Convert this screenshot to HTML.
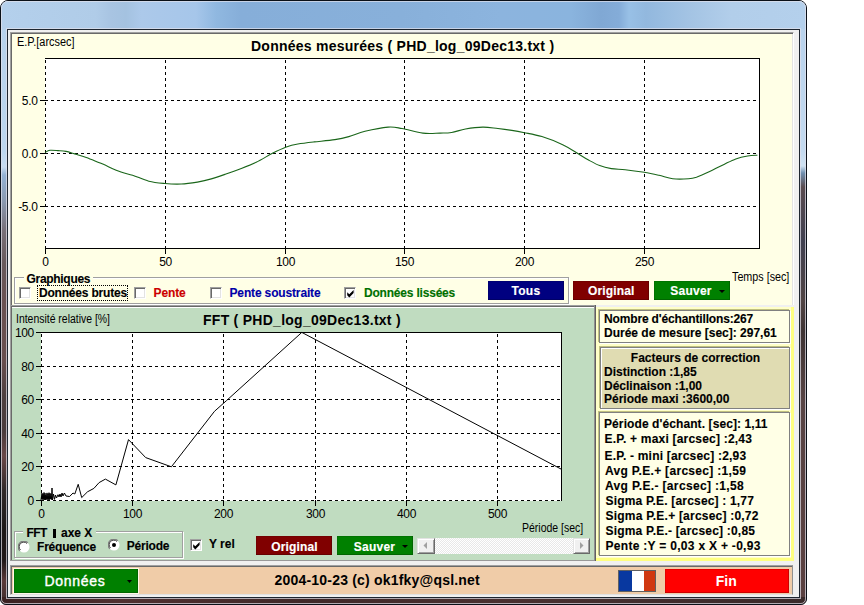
<!DOCTYPE html>
<html><head><meta charset="utf-8">
<style>
*{margin:0;padding:0;box-sizing:border-box}
html,body{width:864px;height:605px;overflow:hidden;background:#fff;position:relative;font-family:"Liberation Sans", sans-serif}
.a{position:absolute}
.t{position:absolute;white-space:pre;line-height:1;font-family:"Liberation Sans", sans-serif}
</style></head><body>
<div class="a" style="left:0px;top:0px;width:807px;height:605px;background:#402c2c;border:1px solid #0a1018;border-radius:8px 8px 6px 6px;overflow:hidden"></div>
<div class="a" style="left:1px;top:1px;width:7px;height:603px;background:linear-gradient(180deg,#b6d1ec 0px,#bcd6ee 150px,#c8dcf0 166px,#94b2d4 174px,#8a9ab0 200px,#787078 230px,#685a5c 262px,#6a5252 300px,#684e4e 360px,#4e4040 395px,#4a3c3c 430px,#6a4848 455px,#302828 490px,#1c1818 530px,#201818 560px,#5a3838 580px,#3a2a2a 605px);border-radius:7px 0 0 5px"></div>
<div class="a" style="left:799px;top:1px;width:7px;height:603px;background:linear-gradient(180deg,#b6d1ec 0px,#c4daf0 150px,#d0e2f2 165px,#7090b0 172px,#5a4c50 186px,#404050 240px,#504444 300px,#3e3434 330px,#584444 400px,#5a4040 605px);border-radius:0 7px 5px 0"></div>
<div class="a" style="left:1px;top:597px;width:805px;height:7px;background:linear-gradient(90deg,#3a2020 0px,#503030 120px,#402828 300px,#4a3030 500px,#3a2a2a 805px);border-radius:0 0 5px 5px"></div>
<div class="a" style="left:1px;top:1px;width:805px;height:28px;background:linear-gradient(90deg,#b4d0ec 0px,#b0cce8 95px,#a8c4e2 110px,#a4c2e0 125px,#acc9ea 140px,#a6c6ea 195px,#90b8e0 215px,#86aed9 240px,#88b0da 400px,#8cb4de 500px,#8ab4de 570px,#80a8d4 600px,#84acd8 618px,#98c0e6 628px,#92b8de 645px,#a4c4e4 690px,#b2ceea 730px,#b4d0ec 806px);border-radius:7px 7px 0 0"></div>
<div class="a" style="left:1px;top:1px;width:805px;height:603px;background:transparent;border:1px solid rgba(225,225,235,0.7);border-radius:7px 7px 5px 5px"></div>
<div class="a" style="left:6px;top:28px;width:795px;height:571px;background:transparent;border:1px solid rgba(225,225,235,0.7)"></div>
<div class="a" style="left:7px;top:29px;width:793px;height:569px;background:#f0f0f0;border:1px solid #1e2630"></div>
<div class="a" style="left:10px;top:32px;width:784px;height:273px;background:#ffffe6;border-top:1px solid #a0a0a0;border-left:1px solid #a0a0a0;border-right:1px solid #fff;box-shadow:inset 1px 1px 0 #696969, inset -1px 0 0 #e3e3e3"></div>
<div class="t" style="left:16.5px;top:36.22px;font-size:12.5px;font-weight:normal;color:#000;letter-spacing:0px;transform:scaleX(0.875);transform-origin:0 0;">E.P.[arcsec]</div>
<div class="t" style="left:251px;top:38.65px;font-size:14px;font-weight:bold;color:#000;letter-spacing:0.25px;-webkit-text-stroke:0.12px #000;-webkit-text-stroke:0;">Données mesurées ( PHD_log_09Dec13.txt )</div>
<div class="t" style="left:-262.5px;width:300px;text-align:right;top:95.04px;font-size:12px;font-weight:normal;color:#000;letter-spacing:-0.35px;">5.0</div>
<div class="t" style="left:-262.5px;width:300px;text-align:right;top:148.04px;font-size:12px;font-weight:normal;color:#000;letter-spacing:-0.35px;">0.0</div>
<div class="t" style="left:-262.5px;width:300px;text-align:right;top:201.04px;font-size:12px;font-weight:normal;color:#000;letter-spacing:-0.35px;">-5.0</div>
<div class="t" style="left:-104.5px;width:300px;text-align:center;top:255.84px;font-size:12px;font-weight:normal;color:#000;letter-spacing:-0.4px;">0</div>
<div class="t" style="left:15.5px;width:300px;text-align:center;top:255.84px;font-size:12px;font-weight:normal;color:#000;letter-spacing:-0.4px;">50</div>
<div class="t" style="left:135.5px;width:300px;text-align:center;top:255.84px;font-size:12px;font-weight:normal;color:#000;letter-spacing:-0.4px;">100</div>
<div class="t" style="left:254.5px;width:300px;text-align:center;top:255.84px;font-size:12px;font-weight:normal;color:#000;letter-spacing:-0.4px;">150</div>
<div class="t" style="left:374.5px;width:300px;text-align:center;top:255.84px;font-size:12px;font-weight:normal;color:#000;letter-spacing:-0.4px;">200</div>
<div class="t" style="left:494.5px;width:300px;text-align:center;top:255.84px;font-size:12px;font-weight:normal;color:#000;letter-spacing:-0.4px;">250</div>
<div class="t" style="left:731.8px;top:270.62px;font-size:12.5px;font-weight:normal;color:#000;letter-spacing:0px;transform:scaleX(0.86);transform-origin:0 0;">Temps [sec]</div>
<div class="a" style="left:14px;top:277px;width:555px;height:27px;background:transparent;border:1px solid #a0a0a0;box-shadow:inset 1px 1px 0 #fff, 1px 1px 0 #fff"></div>
<div class="a" style="left:24px;top:272px;width:69px;height:9px;background:#ffffe6;"></div>
<div class="t" style="left:26.5px;top:272.84px;font-size:12px;font-weight:bold;color:#000;letter-spacing:-0.3px;-webkit-text-stroke:0.12px #000;">Graphiques</div>
<div class="a" style="left:19px;top:287px;width:12px;height:12px;background:#fff;border-top:1px solid #a0a0a0;border-left:1px solid #a0a0a0;border-right:1px solid #fff;border-bottom:1px solid #fff;box-shadow:inset 1px 1px 0 #696969, inset -1px -1px 0 #e3e3e3"></div>
<div class="a" style="left:37px;top:285px;width:91px;height:16px;background:transparent;border:1px dotted #000"></div>
<div class="t" style="left:39px;top:286.84px;font-size:12px;font-weight:bold;color:#000;letter-spacing:-0.2px;-webkit-text-stroke:0.12px #000;">Données brutes</div>
<div class="a" style="left:134px;top:287px;width:12px;height:12px;background:#fff;border-top:1px solid #a0a0a0;border-left:1px solid #a0a0a0;border-right:1px solid #fff;border-bottom:1px solid #fff;box-shadow:inset 1px 1px 0 #696969, inset -1px -1px 0 #e3e3e3"></div>
<div class="t" style="left:153.5px;top:286.84px;font-size:12px;font-weight:bold;color:#cc0000;letter-spacing:-0.1px;-webkit-text-stroke:0.12px #cc0000;">Pente</div>
<div class="a" style="left:210px;top:287px;width:12px;height:12px;background:#fff;border-top:1px solid #a0a0a0;border-left:1px solid #a0a0a0;border-right:1px solid #fff;border-bottom:1px solid #fff;box-shadow:inset 1px 1px 0 #696969, inset -1px -1px 0 #e3e3e3"></div>
<div class="t" style="left:229.5px;top:286.84px;font-size:12px;font-weight:bold;color:#0000a8;letter-spacing:-0.15px;-webkit-text-stroke:0.12px #0000a8;">Pente soustraite</div>
<div class="a" style="left:344px;top:287px;width:12px;height:12px;background:#fff;border-top:1px solid #a0a0a0;border-left:1px solid #a0a0a0;border-right:1px solid #fff;border-bottom:1px solid #fff;box-shadow:inset 1px 1px 0 #696969, inset -1px -1px 0 #e3e3e3"></div>
<svg class="a" style="left:344px;top:287px" width="12" height="12"><path d="M3.2,5.2 L5.3,7.3 L9.6,3 V6.1 L5.3,10.4 L3.2,8.3 Z" fill="#000"/></svg>
<div class="t" style="left:364px;top:286.84px;font-size:12px;font-weight:bold;color:#007000;letter-spacing:-0.2px;-webkit-text-stroke:0.12px #007000;">Données lissées</div>
<div class="a" style="left:488px;top:281px;width:76px;height:19px;background:#000080;box-shadow:inset -1px -1px 0 rgba(0,0,0,0.2), inset 1px 1px 0 rgba(0,0,0,0.1)"></div>
<div class="t" style="left:376.0px;width:300px;text-align:center;top:285.34px;font-size:12px;font-weight:bold;color:#fff;letter-spacing:0.3px;-webkit-text-stroke:0.12px #fff;-webkit-text-stroke:0.15px #fff;">Tous</div>
<div class="a" style="left:573px;top:281px;width:76px;height:19px;background:#800000;box-shadow:inset -1px -1px 0 rgba(0,0,0,0.2), inset 1px 1px 0 rgba(0,0,0,0.1)"></div>
<div class="t" style="left:461.29999999999995px;width:300px;text-align:center;top:285.34px;font-size:12px;font-weight:bold;color:#fff;letter-spacing:0.15px;-webkit-text-stroke:0.12px #fff;-webkit-text-stroke:0.15px #fff;">Original</div>
<div class="a" style="left:654px;top:281px;width:76px;height:19px;background:#008000;box-shadow:inset -1px -1px 0 rgba(0,0,0,0.2), inset 1px 1px 0 rgba(0,0,0,0.1)"></div>
<div class="t" style="left:541px;width:300px;text-align:center;top:285.34px;font-size:12px;font-weight:bold;color:#fff;letter-spacing:0.25px;-webkit-text-stroke:0.12px #fff;-webkit-text-stroke:0.15px #fff;">Sauver</div>
<svg class="a" style="left:719px;top:289.5px" width="7" height="4"><path d="M0,0 H6 L3,3 Z" fill="#000"/></svg>
<div class="a" style="left:10px;top:305px;width:586px;height:256px;background:#c0dcc0;border-top:1px solid #a0a0a0;border-left:1px solid #a0a0a0;border-bottom:1px solid #999;box-shadow:inset 1px 1px 0 #696969, inset 0 2px 0 #fff"></div>
<div class="a" style="left:594px;top:305px;width:1px;height:256px;background:#909090;"></div>
<div class="a" style="left:595px;top:305px;width:1px;height:256px;background:#606060;"></div>
<div class="t" style="left:16.2px;top:313.42px;font-size:12.5px;font-weight:normal;color:#000;letter-spacing:0px;transform:scaleX(0.835);transform-origin:0 0;">Intensité relative [%]</div>
<div class="t" style="left:203px;top:313.35px;font-size:14px;font-weight:bold;color:#000;letter-spacing:0.27px;-webkit-text-stroke:0.12px #000;-webkit-text-stroke:0;">FFT ( PHD_log_09Dec13.txt )</div>
<div class="t" style="left:-266.3px;width:300px;text-align:right;top:495.04px;font-size:12px;font-weight:normal;color:#000;letter-spacing:-0.4px;">0</div>
<div class="t" style="left:-266.3px;width:300px;text-align:right;top:461.04px;font-size:12px;font-weight:normal;color:#000;letter-spacing:-0.4px;">20</div>
<div class="t" style="left:-266.3px;width:300px;text-align:right;top:428.04px;font-size:12px;font-weight:normal;color:#000;letter-spacing:-0.4px;">40</div>
<div class="t" style="left:-266.3px;width:300px;text-align:right;top:394.04px;font-size:12px;font-weight:normal;color:#000;letter-spacing:-0.4px;">60</div>
<div class="t" style="left:-266.3px;width:300px;text-align:right;top:361.04px;font-size:12px;font-weight:normal;color:#000;letter-spacing:-0.4px;">80</div>
<div class="t" style="left:-266.3px;width:300px;text-align:right;top:327.04px;font-size:12px;font-weight:normal;color:#000;letter-spacing:-0.4px;">100</div>
<div class="t" style="left:-108.5px;width:300px;text-align:center;top:507.64px;font-size:12px;font-weight:normal;color:#000;letter-spacing:-0.4px;">0</div>
<div class="t" style="left:-17.5px;width:300px;text-align:center;top:507.64px;font-size:12px;font-weight:normal;color:#000;letter-spacing:-0.4px;">100</div>
<div class="t" style="left:73.5px;width:300px;text-align:center;top:507.64px;font-size:12px;font-weight:normal;color:#000;letter-spacing:-0.4px;">200</div>
<div class="t" style="left:165.5px;width:300px;text-align:center;top:507.64px;font-size:12px;font-weight:normal;color:#000;letter-spacing:-0.4px;">300</div>
<div class="t" style="left:256.5px;width:300px;text-align:center;top:507.64px;font-size:12px;font-weight:normal;color:#000;letter-spacing:-0.4px;">400</div>
<div class="t" style="left:347.5px;width:300px;text-align:center;top:507.64px;font-size:12px;font-weight:normal;color:#000;letter-spacing:-0.4px;">500</div>
<div class="t" style="left:521.8px;top:522.42px;font-size:12.5px;font-weight:normal;color:#000;letter-spacing:0px;transform:scaleX(0.84);transform-origin:0 0;">Période [sec]</div>
<div class="a" style="left:14px;top:531px;width:169px;height:27px;background:transparent;border:1px solid #a0a0a0;box-shadow:inset 1px 1px 0 #fff, 1px 1px 0 #fff"></div>
<div class="a" style="left:23px;top:526px;width:73px;height:9px;background:#c0dcc0;"></div>
<div class="t" style="left:26.5px;top:526.64px;font-size:12px;font-weight:bold;color:#000;letter-spacing:-0.6px;-webkit-text-stroke:0.12px #000;">FFT</div>
<div class="a" style="left:52.6px;top:529px;width:3.4px;height:8.6px;background:#000;"></div>
<div class="t" style="left:61px;top:526.64px;font-size:12px;font-weight:bold;color:#000;letter-spacing:0px;-webkit-text-stroke:0.12px #000;">axe X</div>
<svg class="a" style="left:18px;top:541px" width="12" height="12"><circle cx="6" cy="6" r="5.5" fill="#fff"/><path d="M1.8,9.8 A5.2,5.2 0 0 1 9.8,1.8" fill="none" stroke="#808080" stroke-width="1.2"/><path d="M2.5,9 A4.2,4.2 0 0 1 9,2.5" fill="none" stroke="#404040" stroke-width="1"/></svg>
<div class="t" style="left:37px;top:540.54px;font-size:12px;font-weight:bold;color:#000;letter-spacing:-0.2px;-webkit-text-stroke:0.12px #000;">Fréquence</div>
<svg class="a" style="left:108px;top:539px" width="12" height="12"><circle cx="6" cy="6" r="5.5" fill="#fff"/><path d="M1.8,9.8 A5.2,5.2 0 0 1 9.8,1.8" fill="none" stroke="#808080" stroke-width="1.2"/><path d="M2.5,9 A4.2,4.2 0 0 1 9,2.5" fill="none" stroke="#404040" stroke-width="1"/><circle cx="6" cy="6" r="2" fill="#000"/></svg>
<div class="t" style="left:126.7px;top:539.54px;font-size:12px;font-weight:bold;color:#000;letter-spacing:-0.2px;-webkit-text-stroke:0.12px #000;">Période</div>
<div class="a" style="left:190px;top:539px;width:12px;height:12px;background:#fff;border-top:1px solid #a0a0a0;border-left:1px solid #a0a0a0;border-right:1px solid #fff;border-bottom:1px solid #fff;box-shadow:inset 1px 1px 0 #696969, inset -1px -1px 0 #e3e3e3"></div>
<svg class="a" style="left:190px;top:539px" width="12" height="12"><path d="M3.2,5.2 L5.3,7.3 L9.6,3 V6.1 L5.3,10.4 L3.2,8.3 Z" fill="#000"/></svg>
<div class="t" style="left:209px;top:537.84px;font-size:12px;font-weight:bold;color:#000;letter-spacing:0px;-webkit-text-stroke:0.12px #000;">Y rel</div>
<div class="a" style="left:256px;top:536px;width:76px;height:19px;background:#800000;box-shadow:inset -1px -1px 0 rgba(0,0,0,0.2), inset 1px 1px 0 rgba(0,0,0,0.1)"></div>
<div class="t" style="left:144.5px;width:300px;text-align:center;top:540.84px;font-size:12px;font-weight:bold;color:#fff;letter-spacing:0.15px;-webkit-text-stroke:0.12px #fff;-webkit-text-stroke:0.15px #fff;">Original</div>
<div class="a" style="left:337px;top:536px;width:76px;height:19px;background:#008000;box-shadow:inset -1px -1px 0 rgba(0,0,0,0.2), inset 1px 1px 0 rgba(0,0,0,0.1)"></div>
<div class="t" style="left:224.5px;width:300px;text-align:center;top:540.84px;font-size:12px;font-weight:bold;color:#fff;letter-spacing:0.25px;-webkit-text-stroke:0.12px #fff;-webkit-text-stroke:0.15px #fff;">Sauver</div>
<svg class="a" style="left:402px;top:544.5px" width="7" height="4"><path d="M0,0 H6 L3,3 Z" fill="#000"/></svg>
<div class="a" style="left:417px;top:538px;width:173px;height:16px;background:repeating-conic-gradient(#fff 0 25%,#e8e8e8 0 50%) 0 0/2px 2px;"></div>
<div class="a" style="left:417px;top:538px;width:18px;height:16px;background:#f0f0f0;border-top:1px solid #e3e3e3;border-left:1px solid #e3e3e3;border-right:1px solid #696969;border-bottom:1px solid #696969;box-shadow:inset 1px 1px 0 #fff, inset -1px -1px 0 #a0a0a0"></div>
<svg class="a" style="left:417px;top:538px" width="18" height="16"><path d="M10,4 V11 L6.5,7.5 Z" fill="#a0a0a0"/></svg>
<div class="a" style="left:573px;top:538px;width:17px;height:16px;background:#f0f0f0;border-top:1px solid #e3e3e3;border-left:1px solid #e3e3e3;border-right:1px solid #696969;border-bottom:1px solid #696969;box-shadow:inset 1px 1px 0 #fff, inset -1px -1px 0 #a0a0a0"></div>
<svg class="a" style="left:573px;top:538px" width="17" height="16"><path d="M7,4 V11 L10.5,7.5 Z" fill="#a0a0a0"/></svg>
<div class="a" style="left:596px;top:307px;width:198px;height:254px;background:#ffffc8;box-shadow:inset -3px -3px 0 #ffff80"></div>
<div class="a" style="left:599px;top:310px;width:191px;height:33px;background:#ffffe6;border:1px solid #808080;box-shadow:-1px -1px 0 #c0c080, 1px 1px 0 #fff, inset 0 0 0 transparent"></div>
<div class="a" style="left:600px;top:347px;width:190px;height:62px;background:#e0dcb2;border:1px solid #808080;box-shadow:-1px -1px 0 #c0c080, 1px 1px 0 #fff, inset 1px 1px 0 #fff"></div>
<div class="a" style="left:599px;top:412px;width:191px;height:144px;background:#ffffe6;border:1px solid #808080;box-shadow:-1px -1px 0 #c0c080, 1px 1px 0 #fff, inset 0 0 0 transparent"></div>
<div class="t" style="left:604px;top:312.84px;font-size:12px;font-weight:bold;color:#000;letter-spacing:-0.15px;-webkit-text-stroke:0.12px #000;">Nombre d'échantillons:267</div>
<div class="t" style="left:604px;top:326.84px;font-size:12px;font-weight:bold;color:#000;letter-spacing:0px;-webkit-text-stroke:0.12px #000;">Durée de mesure [sec]: 297,61</div>
<div class="t" style="left:545.5px;width:300px;text-align:center;top:352.04px;font-size:12px;font-weight:bold;color:#000;letter-spacing:0px;-webkit-text-stroke:0.12px #000;">Facteurs de correction</div>
<div class="t" style="left:604px;top:365.84px;font-size:12px;font-weight:bold;color:#000;letter-spacing:0px;-webkit-text-stroke:0.12px #000;">Distinction :1,85</div>
<div class="t" style="left:604px;top:379.84px;font-size:12px;font-weight:bold;color:#000;letter-spacing:0px;-webkit-text-stroke:0.12px #000;">Déclinaison :1,00</div>
<div class="t" style="left:604px;top:393.04px;font-size:12px;font-weight:bold;color:#000;letter-spacing:0px;-webkit-text-stroke:0.12px #000;">Période maxi :3600,00</div>
<div class="t" style="left:604px;top:418.04px;font-size:12px;font-weight:bold;color:#000;letter-spacing:0.093px;-webkit-text-stroke:0.12px #000;">Période d'échant. [sec]: 1,11</div>
<div class="t" style="left:604.5px;top:433.34px;font-size:12px;font-weight:bold;color:#000;letter-spacing:0.208px;-webkit-text-stroke:0.12px #000;">E.P. + maxi [arcsec] :2,43</div>
<div class="t" style="left:604.5px;top:449.84px;font-size:12px;font-weight:bold;color:#000;letter-spacing:0.204px;-webkit-text-stroke:0.12px #000;">E.P. - mini [arcsec] :2,93</div>
<div class="t" style="left:605px;top:465.34px;font-size:12px;font-weight:bold;color:#000;letter-spacing:0.309px;-webkit-text-stroke:0.12px #000;">Avg P.E.+ [arcsec] :1,59</div>
<div class="t" style="left:605px;top:480.34px;font-size:12px;font-weight:bold;color:#000;letter-spacing:0.348px;-webkit-text-stroke:0.12px #000;">Avg P.E.- [arcsec] :1,58</div>
<div class="t" style="left:605.5px;top:495.34px;font-size:12px;font-weight:bold;color:#000;letter-spacing:0.18px;-webkit-text-stroke:0.12px #000;">Sigma P.E. [arcsec] : 1,77</div>
<div class="t" style="left:605.5px;top:510.34px;font-size:12px;font-weight:bold;color:#000;letter-spacing:0.216px;-webkit-text-stroke:0.12px #000;">Sigma P.E.+ [arcsec] :0,72</div>
<div class="t" style="left:605.5px;top:525.34px;font-size:12px;font-weight:bold;color:#000;letter-spacing:0.196px;-webkit-text-stroke:0.12px #000;">Sigma P.E.- [arcsec] :0,85</div>
<div class="t" style="left:605.5px;top:539.84px;font-size:12px;font-weight:bold;color:#000;letter-spacing:0.296px;-webkit-text-stroke:0.12px #000;">Pente :Y = 0,03 x X + -0,93</div>
<div class="a" style="left:10px;top:565px;width:783px;height:30px;background:#f0cca8;border-top:1px solid #a0a0a0;border-left:1px solid #a0a0a0;border-right:1px solid #909090;border-bottom:1px solid #e0e0e0;box-shadow:inset 1px 1px 0 #696969"></div>
<div class="a" style="left:13px;top:568px;width:126px;height:26px;background:#fff8e8;"></div>
<div class="a" style="left:14px;top:569px;width:124px;height:24px;background:#008000;box-shadow:inset -1px -1px 0 rgba(0,0,0,0.2), inset 1px 1px 0 rgba(0,0,0,0.1)"></div>
<div class="t" style="left:-75px;width:300px;text-align:center;top:573.85px;font-size:14px;font-weight:normal;color:#fff;letter-spacing:0.7px;-webkit-text-stroke:0.4px #fff;">Données</div>
<svg class="a" style="left:127px;top:580px" width="6" height="4"><path d="M0,0 H5 L2.5,3 Z" fill="#000"/></svg>
<div class="t" style="left:274.5px;top:573.15px;font-size:14px;font-weight:bold;color:#000;letter-spacing:0.2px;-webkit-text-stroke:0.12px #000;-webkit-text-stroke:0;">2004-10-23 (c) ok1fky@qsl.net</div>
<div class="a" style="left:618px;top:570px;width:38px;height:22px;background:linear-gradient(90deg,#0838a0 0 13px,#fff 13px 25px,#d03810 25px);border:1px solid #606060"></div>
<div class="a" style="left:665px;top:569px;width:124px;height:24px;background:#ff0000;box-shadow:inset -1px -1px 0 rgba(0,0,0,0.2), inset 1px 1px 0 rgba(0,0,0,0.1)"></div>
<div class="t" style="left:576.3px;width:300px;text-align:center;top:574.15px;font-size:14px;font-weight:bold;color:#fff;letter-spacing:0px;-webkit-text-stroke:0.12px #fff;-webkit-text-stroke:0;">Fin</div>
<svg class="a" style="left:0;top:0" width="864" height="605" shape-rendering="crispEdges">
<rect x="45" y="58" width="714" height="190" fill="#fff"/>
<line x1="45.5" y1="60" x2="45.5" y2="248" stroke="#000" stroke-width="1" stroke-dasharray="3,3"/>
<line x1="165.5" y1="60" x2="165.5" y2="248" stroke="#000" stroke-width="1" stroke-dasharray="3,3"/>
<line x1="285.5" y1="60" x2="285.5" y2="248" stroke="#000" stroke-width="1" stroke-dasharray="3,3"/>
<line x1="404.5" y1="60" x2="404.5" y2="248" stroke="#000" stroke-width="1" stroke-dasharray="3,3"/>
<line x1="524.5" y1="60" x2="524.5" y2="248" stroke="#000" stroke-width="1" stroke-dasharray="3,3"/>
<line x1="644.5" y1="60" x2="644.5" y2="248" stroke="#000" stroke-width="1" stroke-dasharray="3,3"/>
<line x1="45" y1="100.5" x2="759" y2="100.5" stroke="#000" stroke-width="1" stroke-dasharray="3,3"/>
<line x1="40" y1="100.5" x2="45" y2="100.5" stroke="#000" stroke-width="1"/>
<line x1="45" y1="153.5" x2="759" y2="153.5" stroke="#000" stroke-width="1" stroke-dasharray="3,3"/>
<line x1="40" y1="153.5" x2="45" y2="153.5" stroke="#000" stroke-width="1"/>
<line x1="45" y1="206.5" x2="759" y2="206.5" stroke="#000" stroke-width="1" stroke-dasharray="3,3"/>
<line x1="40" y1="206.5" x2="45" y2="206.5" stroke="#000" stroke-width="1"/>
<path d="M45,58.5 H759.5 V248.5 H45" fill="none" stroke="#000" stroke-width="1"/>
<line x1="45.5" y1="248" x2="45.5" y2="254" stroke="#000" stroke-width="1"/>
<line x1="165.5" y1="248" x2="165.5" y2="254" stroke="#000" stroke-width="1"/>
<line x1="285.5" y1="248" x2="285.5" y2="254" stroke="#000" stroke-width="1"/>
<line x1="404.5" y1="248" x2="404.5" y2="254" stroke="#000" stroke-width="1"/>
<line x1="524.5" y1="248" x2="524.5" y2="254" stroke="#000" stroke-width="1"/>
<line x1="644.5" y1="248" x2="644.5" y2="254" stroke="#000" stroke-width="1"/>
<path d="M45.0,152.5 C45.8,152.1 47.8,150.6 50.0,150.3 C52.2,150.0 55.3,150.4 58.0,150.6 C60.7,150.8 63.2,150.8 66.0,151.4 C68.8,152.0 71.3,152.9 74.7,153.9 C78.1,154.9 82.0,155.9 86.3,157.4 C90.5,158.9 94.4,160.7 100.2,163.1 C106.0,165.5 115.6,170.0 121.0,172.0 C126.4,174.0 128.0,173.7 132.6,175.2 C137.2,176.7 143.4,179.8 148.8,181.2 C154.2,182.6 159.6,183.0 165.0,183.5 C170.4,184.0 175.8,184.2 181.2,184.0 C186.6,183.8 192.4,182.9 197.4,182.1 C202.4,181.2 206.7,180.2 211.3,178.9 C215.9,177.6 220.4,176.0 225.2,174.3 C230.0,172.7 234.8,171.0 240.0,169.0 C245.2,167.0 250.8,164.9 256.2,162.3 C261.6,159.7 267.4,155.9 272.4,153.3 C277.4,150.8 282.1,148.6 286.3,147.0 C290.6,145.4 293.3,144.8 297.9,144.0 C302.5,143.2 307.9,142.6 314.1,141.9 C320.3,141.2 329.1,140.5 334.9,139.6 C340.7,138.7 343.8,138.0 348.8,136.6 C353.8,135.2 358.4,132.9 365.0,131.3 C371.6,129.7 381.9,127.6 388.1,127.1 C394.3,126.6 396.2,127.5 402.0,128.5 C407.8,129.5 416.6,132.3 422.9,133.1 C429.2,133.9 435.2,133.2 440.0,133.1 C444.8,133.0 447.4,133.2 451.6,132.5 C455.9,131.8 460.3,129.9 465.5,129.0 C470.7,128.1 477.4,127.2 482.8,127.1 C488.2,127.0 493.1,128.0 497.9,128.5 C502.7,129.1 507.4,129.7 511.8,130.4 C516.2,131.1 519.5,131.7 524.5,132.7 C529.5,133.7 535.5,134.6 541.9,136.6 C548.3,138.6 556.9,142.0 562.7,144.7 C568.5,147.4 572.4,150.3 576.6,152.8 C580.8,155.3 584.2,157.7 588.1,159.8 C592.0,161.9 595.8,164.1 599.7,165.6 C603.6,167.1 607.0,167.9 611.3,168.6 C615.5,169.3 619.7,169.1 625.2,169.7 C630.7,170.3 638.7,171.4 644.3,172.3 C649.9,173.2 654.2,174.2 659.0,175.3 C663.8,176.4 667.9,178.2 672.8,178.8 C677.7,179.4 684.6,179.1 688.5,178.8 C692.4,178.5 692.8,178.4 696.4,177.2 C700.0,175.9 705.6,173.4 710.2,171.3 C714.8,169.2 719.7,166.5 724.0,164.4 C728.3,162.3 731.9,160.3 735.8,158.9 C739.7,157.5 744.0,156.6 747.6,156.0 C751.2,155.4 755.8,155.3 757.4,155.2" fill="none" stroke="#1a661a" stroke-width="1.1" shape-rendering="geometricPrecision"/>
<rect x="41" y="332" width="520" height="169" fill="#fff"/>
<line x1="41.5" y1="334" x2="41.5" y2="500" stroke="#000" stroke-width="1" stroke-dasharray="3,3"/>
<line x1="41.5" y1="500" x2="41.5" y2="506" stroke="#000" stroke-width="1"/>
<line x1="132.5" y1="334" x2="132.5" y2="500" stroke="#000" stroke-width="1" stroke-dasharray="3,3"/>
<line x1="132.5" y1="500" x2="132.5" y2="506" stroke="#000" stroke-width="1"/>
<line x1="223.5" y1="334" x2="223.5" y2="500" stroke="#000" stroke-width="1" stroke-dasharray="3,3"/>
<line x1="223.5" y1="500" x2="223.5" y2="506" stroke="#000" stroke-width="1"/>
<line x1="315.5" y1="334" x2="315.5" y2="500" stroke="#000" stroke-width="1" stroke-dasharray="3,3"/>
<line x1="315.5" y1="500" x2="315.5" y2="506" stroke="#000" stroke-width="1"/>
<line x1="406.5" y1="334" x2="406.5" y2="500" stroke="#000" stroke-width="1" stroke-dasharray="3,3"/>
<line x1="406.5" y1="500" x2="406.5" y2="506" stroke="#000" stroke-width="1"/>
<line x1="497.5" y1="334" x2="497.5" y2="500" stroke="#000" stroke-width="1" stroke-dasharray="3,3"/>
<line x1="497.5" y1="500" x2="497.5" y2="506" stroke="#000" stroke-width="1"/>
<line x1="41" y1="500.5" x2="561" y2="500.5" stroke="#000" stroke-width="1" stroke-dasharray="3,3"/>
<line x1="36" y1="500.5" x2="41" y2="500.5" stroke="#000" stroke-width="1"/>
<line x1="41" y1="466.5" x2="561" y2="466.5" stroke="#000" stroke-width="1" stroke-dasharray="3,3"/>
<line x1="36" y1="466.5" x2="41" y2="466.5" stroke="#000" stroke-width="1"/>
<line x1="41" y1="433.5" x2="561" y2="433.5" stroke="#000" stroke-width="1" stroke-dasharray="3,3"/>
<line x1="36" y1="433.5" x2="41" y2="433.5" stroke="#000" stroke-width="1"/>
<line x1="41" y1="399.5" x2="561" y2="399.5" stroke="#000" stroke-width="1" stroke-dasharray="3,3"/>
<line x1="36" y1="399.5" x2="41" y2="399.5" stroke="#000" stroke-width="1"/>
<line x1="41" y1="366.5" x2="561" y2="366.5" stroke="#000" stroke-width="1" stroke-dasharray="3,3"/>
<line x1="36" y1="366.5" x2="41" y2="366.5" stroke="#000" stroke-width="1"/>
<line x1="41" y1="332.5" x2="561" y2="332.5" stroke="#000" stroke-width="1" stroke-dasharray="3,3"/>
<line x1="36" y1="332.5" x2="41" y2="332.5" stroke="#000" stroke-width="1"/>
<path d="M41,332.5 H561.5 V500.5" fill="none" stroke="#000" stroke-width="1"/>
<polyline points="41.0,500.0 42.0,493.1 42.3,499.5 42.7,494.7 43.0,494.0 43.3,499.6 43.7,494.1 44.0,492.5 44.3,499.8 44.7,494.5 45.0,493.1 45.3,500.0 45.7,494.9 46.0,494.6 46.3,499.5 46.7,495.3 47.0,492.9 47.3,499.6 47.7,495.7 48.0,493.8 48.3,499.7 48.7,495.3 49.0,492.7 49.3,499.8 49.7,495.2 50.0,493.3 50.3,499.0 50.7,495.7 51.0,493.7 51.3,499.7 51.7,495.8 52.0,488.0 52.5,500.0 53.5,494.0 54.5,499.4 55.5,495.0 56.5,498.0 58.0,494.7 59.0,497.0 60.0,494.0 61.0,497.0 62.0,493.0 63.0,496.0 64.4,493.0 66.0,496.0 69.6,496.5 73.0,493.0 74.8,494.0 78.2,484.3 81.7,497.6 87.5,491.8 93.9,488.4 99.1,482.6 105.4,479.1 115.9,484.9 128.5,439.6 145.7,457.6 171.4,466.8 214.5,411.3 226.4,400.7 301.8,332.4 561.5,469.3" fill="none" stroke="#000" stroke-width="1" shape-rendering="geometricPrecision"/>
</svg></body></html>
